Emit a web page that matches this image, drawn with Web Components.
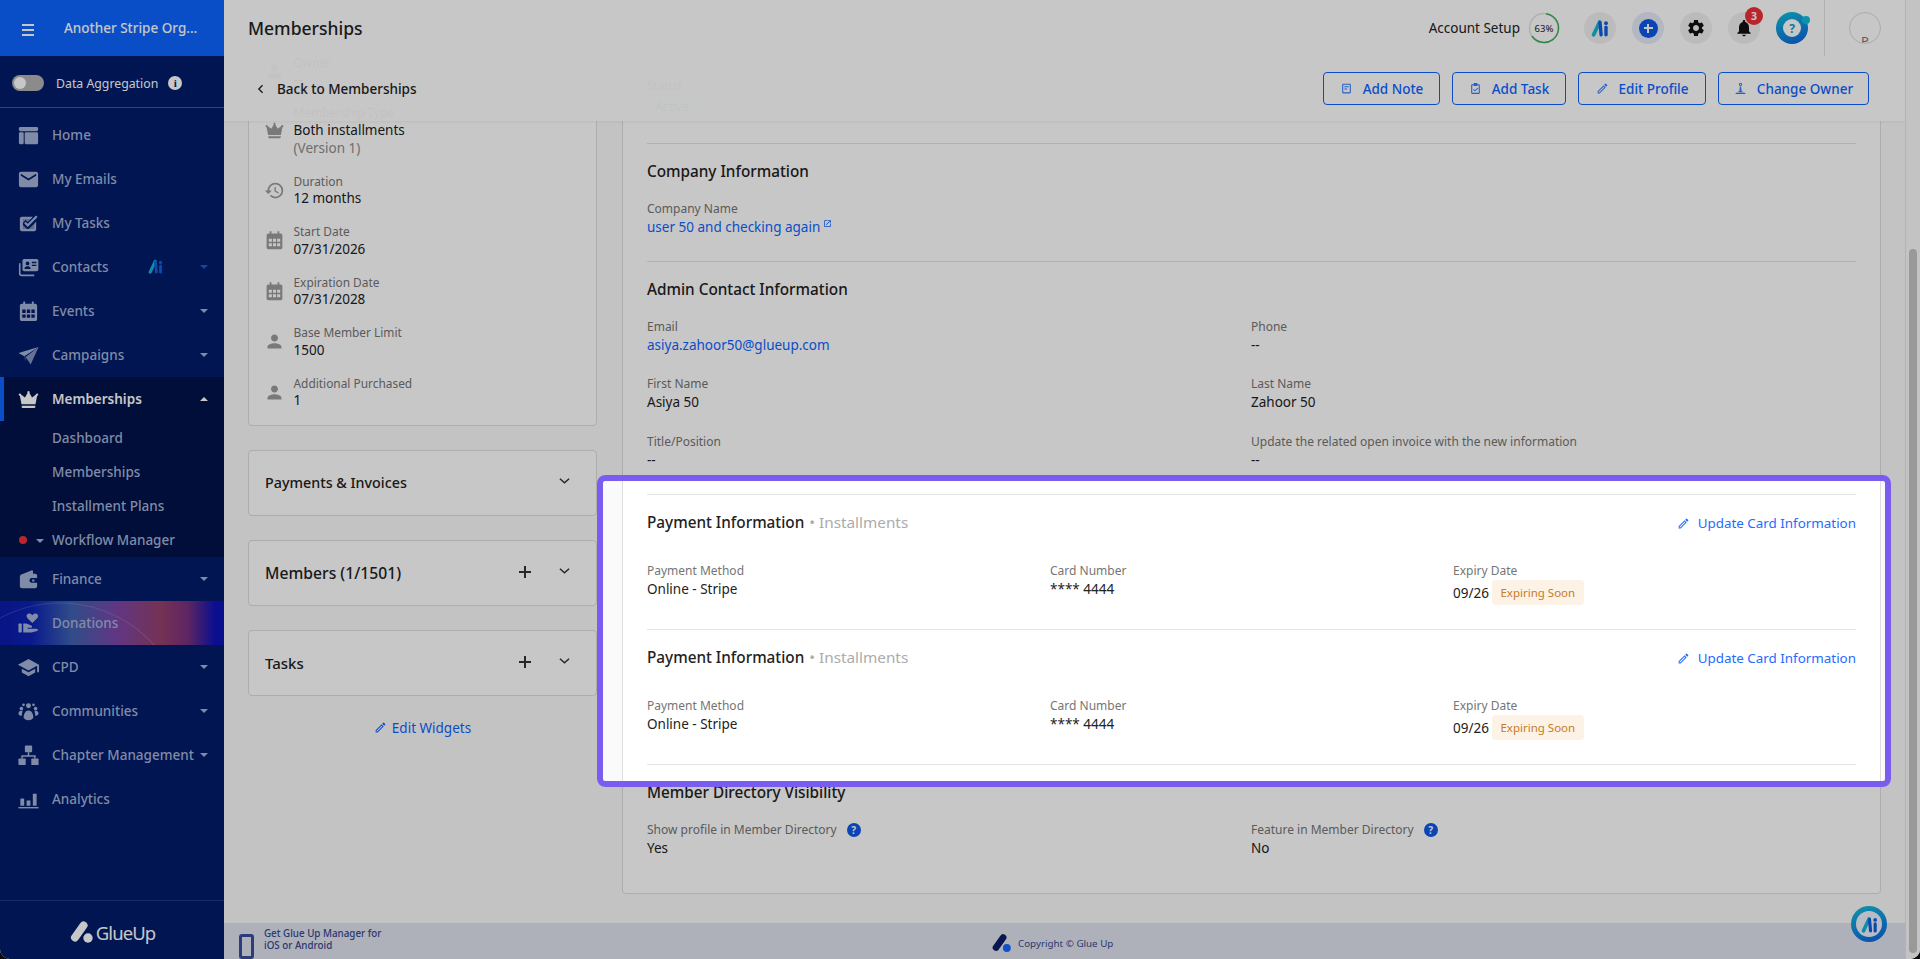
<!DOCTYPE html>
<html lang="en">
<head>
<meta charset="utf-8">
<title>Memberships</title>
<style>
  html { background: #0c0c0c; height: 100%; }
  body { margin: 0; height: 959px; overflow: hidden; font-family: "Noto Sans", "Liberation Sans", sans-serif; font-size: 13.5px; color: #222; }
</style>
</head>
<body>

<gu-app>
  <gu-sidebar slot="sidebar" org="Another Stripe Org...">
    <gu-nav-item icon="web" label="Home"></gu-nav-item>
    <gu-nav-item icon="mail" label="My Emails"></gu-nav-item>
    <gu-nav-item icon="tasks" label="My Tasks"></gu-nav-item>
    <gu-nav-item icon="contacts" label="Contacts" caret="dim" ai></gu-nav-item>
    <gu-nav-item icon="calendar" label="Events" caret="down"></gu-nav-item>
    <gu-nav-item icon="send" label="Campaigns" caret="down"></gu-nav-item>
    <gu-nav-group>
      <gu-nav-item icon="crown" label="Memberships" caret="up" active></gu-nav-item>
      <gu-sub-item label="Dashboard"></gu-sub-item>
      <gu-sub-item label="Memberships"></gu-sub-item>
      <gu-sub-item label="Installment Plans"></gu-sub-item>
      <gu-sub-item label="Workflow Manager" flag></gu-sub-item>
    </gu-nav-group>
    <gu-nav-item icon="wallet" label="Finance" caret="down"></gu-nav-item>
    <gu-nav-item icon="donate" label="Donations" promo></gu-nav-item>
    <gu-nav-item icon="school" label="CPD" caret="down"></gu-nav-item>
    <gu-nav-item icon="groups" label="Communities" caret="down"></gu-nav-item>
    <gu-nav-item icon="tree" label="Chapter Management" caret="down"></gu-nav-item>
    <gu-nav-item icon="bars" label="Analytics"></gu-nav-item>
  </gu-sidebar>

  <gu-topbar slot="topbar" heading="Memberships"></gu-topbar>

  <gu-subbar slot="subbar">
    <gu-button icon="note" style="width:117px">Add Note</gu-button>
    <gu-button icon="clip" style="width:114px">Add Task</gu-button>
    <gu-button icon="pencil" style="width:128px">Edit Profile</gu-button>
    <gu-button icon="owner" style="width:151px">Change Owner</gu-button>
  </gu-subbar>

  <gu-left-col slot="left">
    <gu-card class="facts">
      <gu-fact icon="person" label="Owner">--</gu-fact>
      <gu-fact icon="crown" label="Membership Type">Both installments<gu-muted>(Version 1)</gu-muted></gu-fact>
      <gu-fact icon="history" label="Duration">12 months</gu-fact>
      <gu-fact icon="calendar" label="Start Date">07/31/2026</gu-fact>
      <gu-fact icon="calendar" label="Expiration Date">07/31/2028</gu-fact>
      <gu-fact icon="person" label="Base Member Limit">1500</gu-fact>
      <gu-fact icon="person" label="Additional Purchased" last>1</gu-fact>
    </gu-card>
    <gu-widget heading="Payments &amp; Invoices" style="--size:14.3px"></gu-widget>
    <gu-widget heading="Members (1/1501)" style="--size:15.7px" addable></gu-widget>
    <gu-widget heading="Tasks" addable></gu-widget>
    <gu-edit-widgets></gu-edit-widgets>
  </gu-left-col>

  <gu-detail slot="right">
    <gu-status></gu-status>

    <gu-section heading="Company Information" cols="2">
      <gu-field label="Company Name"><gu-link external>user 50 and checking again</gu-link></gu-field>
    </gu-section>

    <gu-section heading="Admin Contact Information" cols="2">
      <gu-field label="Email"><gu-link>asiya.zahoor50@glueup.com</gu-link></gu-field>
      <gu-field label="Phone">--</gu-field>
      <gu-field label="First Name">Asiya 50</gu-field>
      <gu-field label="Last Name">Zahoor 50</gu-field>
      <gu-field label="Title/Position">--</gu-field>
      <gu-field label="Update the related open invoice with the new information">--</gu-field>
    </gu-section>

    <gu-section heading="Payment Information" sub="Installments" cols="3" roomy>
      <gu-update-link slot="action"></gu-update-link>
      <gu-field label="Payment Method">Online - Stripe</gu-field>
      <gu-field label="Card Number">**** 4444</gu-field>
      <gu-field label="Expiry Date">09/26<gu-badge>Expiring Soon</gu-badge></gu-field>
    </gu-section>

    <gu-section heading="Payment Information" sub="Installments" cols="3" roomy>
      <gu-update-link slot="action"></gu-update-link>
      <gu-field label="Payment Method">Online - Stripe</gu-field>
      <gu-field label="Card Number">**** 4444</gu-field>
      <gu-field label="Expiry Date">09/26<gu-badge>Expiring Soon</gu-badge></gu-field>
    </gu-section>

    <gu-section heading="Member Directory Visibility" cols="2" closing>
      <gu-field label="Show profile in Member Directory" help>Yes</gu-field>
      <gu-field label="Feature in Member Directory" help>No</gu-field>
    </gu-section>
  </gu-detail>

  <gu-footer slot="footer"></gu-footer>
</gu-app>

<script>
const FONT = '"Noto Sans", "Liberation Sans", sans-serif';

// 24x24 icon bodies, all painted with currentColor
const ICONS = {
  web: '<rect x="2" y="3" width="20" height="4.6" rx="1.5"/><rect x="2" y="8.6" width="5" height="12.4" rx="1.2"/><rect x="8" y="8.6" width="14" height="12.4" rx="1.2"/>',
  mail: '<path d="M20 4H4c-1.1 0-2 .9-2 2v12c0 1.1.9 2 2 2h16c1.1 0 2-.9 2-2V6c0-1.1-.9-2-2-2zm0 4l-8 5-8-5V6l8 5 8-5v2z"/>',
  tasks: '<path fill-rule="evenodd" d="M5 5h11.5l-2 2.2H6.2v10.6h11.6v-5.3L20 10v8c0 1.1-.9 2-2 2H5c-1.1 0-2-.9-2-2V7c0-1.1.9-2 2-2z"/><path d="M11.2 15.6L7.4 11.8l1.7-1.7 2.1 2.1 8.6-8.6 1.7 1.7z"/><path opacity=".75" d="M6.2 7.2h8.3l-3.3 3.3-2.1-2.1-2.9 2.9z"/><path opacity=".75" d="M6.2 13.5v4.3h11.6v-5.3l-6.6 6z"/>',
  contacts: '<path fill-rule="evenodd" d="M7.5 3h13c1 0 1.8.8 1.8 1.8v9.4c0 1-.8 1.8-1.8 1.8h-13c-1 0-1.8-.8-1.8-1.8V4.8C5.7 3.8 6.5 3 7.5 3zM11 5.7a2 2 0 1 0 0 4 2 2 0 0 0 0-4zM7.9 13.5h6.2v-.8c0-1.4-2-2-3.1-2s-3.1.6-3.1 2zM15.5 6h4.7v1.5h-4.7zM15.5 9h4.7v1.5h-4.7z"/><path d="M2 7.5h1.7v10.700c0 .7.5 1.2 1.2 1.2H18V21H4.5C3.1 21 2 19.9 2 18.5z"/>',
  calendar: '<path fill-rule="evenodd" d="M6.5 1.5h2V4h7V1.5h2V4H19c1.1 0 2 .9 2 2v14c0 1.1-.9 2-2 2H5c-1.1 0-2-.9-2-2V6c0-1.1.9-2 2-2h1.5zM5.5 10v3.5H9V10zM10.3 10v3.5h3.4V10zM15 10v3.5h3.5V10zM5.5 15v3.5H9V15zM10.3 15v3.5h3.4V15zM15 15v3.5h3.5V15z"/>',
  send: '<path d="M22.5 3L1.5 9.5l6.2 3.3z"/><path opacity=".8" d="M22.5 3L9 13.5l5.3 8z"/><path opacity=".6" d="M7.7 12.8L9 13.5l-.3 5z"/>',
  crown: '<path d="M12 3.2a1.3 1.3 0 0 1 1 2.1l2.7 4.7 4.1-3.1a1.2 1.2 0 1 1 1.2 1.3L19.3 17H4.7L3 8.2a1.2 1.2 0 1 1 1.2-1.3L8.3 10 11 5.3a1.3 1.3 0 0 1 1-2.1z"/><path d="M4.9 18.5h14.2v1.3c0 .6-.4 1-1 1H5.9c-.6 0-1-.4-1-1z"/>',
  wallet: '<path fill-rule="evenodd" d="M3 9c0-1 .6-1.9 1.5-2.3L15 2.5c.8-.3 1.7.3 1.7 1.2V6H19c1.1 0 2 .9 2 2v11c0 1.1-.9 2-2 2H5c-1.1 0-2-.9-2-2zM15.5 10.5a2.5 2.5 0 0 0 0 5H21v-5zM15.8 12h2.4v2h-2.4z"/>',
  donate: '<path d="M16 11.5l-3.8-3.7C10.8 6.4 10 5.3 10 4.1 10 2.6 11.2 1.5 12.6 1.5c1.3 0 2.5.7 3.4 1.9.9-1.2 2.1-1.9 3.4-1.9 1.4 0 2.6 1.1 2.6 2.6 0 1.2-.8 2.3-2.2 3.7z"/><rect x="1.5" y="12" width="3.5" height="9.5" rx=".8"/><path d="M6.5 12h3.2l5.2 2c1.3.5 1 2.5-.5 2.5H11v1h9c1.8 0 2.5 1.5 1 2.3l-6 1.7H6.5z"/>',
  school: '<path d="M5 13.18v4L12 21l7-3.82v-4L12 17l-7-3.82zM12 3L1 9l11 6 9-4.91V17h2V9L12 3z"/>',
  groups: '<circle cx="12" cy="6" r="2.6"/><path d="M7 18c0-4 2.2-7 5-7s5 3 5 7c0 1.5-2 3-5 3s-5-1.5-5-3z"/><circle cx="4.6" cy="9" r="1.9"/><circle cx="19.4" cy="9" r="1.9"/><circle cx="6.8" cy="5" r="1.4"/><circle cx="17.2" cy="5" r="1.4"/><path d="M1.5 14c0-1.3 1.2-2.7 2.8-2.7.6 0 1.1.2 1.6.5-.6 1.5-.9 3.1-.9 4.7C3 16.5 1.5 15.5 1.5 14zM22.5 14c0-1.3-1.2-2.7-2.8-2.7-.6 0-1.1.2-1.6.5.6 1.5.9 3.1.9 4.7 1.5 0 3.5-1 3.5-2.500z"/>',
  tree: '<rect x="8.2" y="1.5" width="7.6" height="7" rx="1"/><rect x="1.5" y="15" width="7.6" height="7" rx="1"/><rect x="14.9" y="15" width="7.6" height="7" rx="1"/><path d="M11.2 8.5h1.6v3.2h6.7V15h-1.6v-1.7H6.1V15H4.500v-3.3h6.7z"/>',
  bars: '<rect x="3.5" y="11" width="4" height="7.5"/><rect x="10" y="13" width="4" height="5.5"/><rect x="16.5" y="6" width="4" height="12.5"/><rect x="1.5" y="19.8" width="21" height="1.5"/>',
  person: '<path d="M12 12c2.21 0 4-1.79 4-4s-1.79-4-4-4-4 1.79-4 4 1.79 4 4 4zm0 2c-2.67 0-8 1.34-8 4v2h16v-2c0-2.66-5.33-4-8-4z"/>',
  history: '<path d="M13 3a9 9 0 0 0-9 9H1l3.89 3.89.07.14L9 12H6c0-3.87 3.13-7 7-7s7 3.13 7 7-3.13 7-7 7c-1.93 0-3.68-.79-4.94-2.06l-1.42 1.42A8.954 8.954 0 0 0 13 21a9 9 0 0 0 0-18zm-1 5v5l4.28 2.54.72-1.21-3.5-2.08V8H12z"/>',
  gear: '<path d="M19.14 12.94c.04-.3.06-.61.06-.94 0-.32-.02-.64-.07-.94l2.03-1.58c.18-.14.23-.41.12-.61l-1.92-3.32c-.12-.22-.37-.29-.59-.22l-2.39.96c-.5-.38-1.03-.7-1.62-.94l-.36-2.54c-.04-.24-.24-.41-.48-.41h-3.84c-.24 0-.43.17-.47.41l-.36 2.54c-.59.24-1.13.57-1.62.94l-2.39-.96c-.22-.08-.47 0-.59.22L2.74 8.87c-.12.21-.08.47.12.61l2.03 1.58c-.05.3-.09.63-.09.94s.02.64.07.94l-2.03 1.58c-.18.14-.23.41-.12.61l1.92 3.32c.12.22.37.29.59.22l2.39-.96c.5.38 1.03.7 1.62.94l.36 2.54c.05.24.24.41.48.41h3.84c.24 0 .44-.17.47-.41l.36-2.54c.59-.24 1.13-.56 1.62-.94l2.39.96c.22.08.47 0 .59-.22l1.92-3.32c.12-.22.07-.47-.12-.61l-2.01-1.58zM12 15.6c-1.98 0-3.6-1.62-3.6-3.6s1.62-3.6 3.6-3.6 3.6 1.62 3.6 3.6-1.62 3.6-3.6 3.6z"/>',
  bell: '<path d="M12 22c1.1 0 2-.9 2-2h-4c0 1.1.9 2 2 2zm6-6v-5c0-3.07-1.63-5.64-4.5-6.32V4c0-.83-.67-1.5-1.5-1.5s-1.5.67-1.5 1.5v.68C7.64 5.36 6 7.92 6 11v5l-2 2v1h16v-1l-2-2z"/>',
  pencil: '<path fill-rule="evenodd" d="M3 17.25V21h3.75L17.81 9.94l-3.75-3.75L3 17.25zM5.92 19.3H4.7v-1.22l9.36-9.36 1.22 1.22L5.92 19.3zM20.71 7.04a1 1 0 0 0 0-1.41l-2.34-2.34a1 1 0 0 0-1.41 0l-1.83 1.83 3.75 3.75 1.83-1.83z"/>',
  note: '<path fill-rule="evenodd" d="M6 3h12c1.1 0 2 .9 2 2v14c0 1.1-.9 2-2 2H6c-1.1 0-2-.9-2-2V5c0-1.1.9-2 2-2zm0 2v14h12V5zM8 8h8v1.8H8zM8 12h5v1.8H8z"/>',
  clip: '<path fill-rule="evenodd" d="M9.5 2h5c.6 0 1 .4 1 1v1H18c1.1 0 2 .9 2 2v14c0 1.1-.9 2-2 2H6c-1.1 0-2-.9-2-2V6c0-1.1.9-2 2-2h2.5V3c0-.6.4-1 1-1zM6 6v14h12V6h-2.5v1.5h-7V6zM15.6 10.5l1.3 1.3-5.9 5.9-3.4-3.4 1.3-1.3 2.1 2.1z"/>',
  owner: '<path fill-rule="evenodd" d="M12 1.5a3 3 0 1 1 0 6 3 3 0 0 1 0-6zm0 1.8a1.2 1.2 0 1 0 0 2.4 1.2 1.2 0 0 0 0-2.4z"/><path d="M10.8 8.5h2.4l.8 8.5c2 .3 3.5 1 3.5 1.8H6.5c0-.8 1.5-1.5 3.5-1.8z"/><rect x="3" y="20" width="18" height="2" rx="1"/>',
  ext: '<path d="M19 19H5V5h7V3H5a2 2 0 0 0-2 2v14a2 2 0 0 0 2 2h14c1.1 0 2-.9 2-2v-7h-2v7zM14 3v2h3.59l-9.83 9.83 1.41 1.41L19 6.41V10h2V3h-7z"/>'
};

const svg = (name, size) =>
  `<svg viewBox="0 0 24 24" width="${size}" height="${size}" fill="currentColor" aria-hidden="true">${ICONS[name]}</svg>`;

// the three-stroke "Ai" mark used in the bar, the contacts row and the chat bubble
const aiMark = (w, h) => `<svg viewBox="0 0 24 24" width="${w}" height="${h}" aria-hidden="true">
  <path d="M3.5 21L11.5 4" stroke="#12b5d8" stroke-width="5" stroke-linecap="round" fill="none"/>
  <path d="M12 5L13.5 21" stroke="#0e5fe0" stroke-width="4.5" stroke-linecap="round" fill="none"/>
  <circle cx="20" cy="5.5" r="2.6" fill="#0e5fe0"/>
  <path d="M20 11V21" stroke="#0e5fe0" stroke-width="4.5" stroke-linecap="round" fill="none"/>
</svg>`;

// the Glue Up mark: slanted pill and a dot
const glueMark = (size, pill, dot) => `<svg viewBox="0 0 24 24" width="${size}" height="${size}" aria-hidden="true">
  <path d="M14.5 5.5L6 17.5" stroke="${pill}" stroke-width="8" stroke-linecap="round" fill="none"/>
  <circle cx="19" cy="18" r="4.7" fill="${dot}"/>
</svg>`;

// small helper so every element below reads the same
function define(tag, html) {
  customElements.define(tag, class extends HTMLElement {
    constructor() {
      super();
      this.attachShadow({ mode: 'open' });
    }
    connectedCallback() {
      this.shadowRoot.innerHTML = typeof html === 'function' ? html(this) : html;
    }
  });
}

define('gu-app', `
  <style>
    :host { display: grid; grid-template-columns: 224px 1fr 15px; height: 959px; position: relative; overflow: hidden; border-radius: 0 0 10px 10px; background: #fafafa; font-family: ${FONT}; }
    .main { display: flex; flex-direction: column; min-width: 0; height: 959px; }
    .view { flex: 1; position: relative; overflow: hidden; min-height: 0; }
    .scroll { display: grid; grid-template-columns: 349px 1259px; column-gap: 25px; padding: 0 24px; margin-top: -30px; align-items: start; }
    .track { background: #fafafa; border-left: 1px solid #e6e6e6; position: relative; }
    /* scrollbar thumb sits over its track */
    .thumb { position: absolute; left: 3px; top: 249px; bottom: 6px; width: 8px; border-radius: 4px; background: #c4c4c4; }
    /* the tour highlight: everything outside it is dimmed */
    .spot { position: absolute; left: 597px; top: 475px; width: 1294px; height: 312px; box-sizing: border-box; border: 6px solid #7a5cf0; border-radius: 8px; box-shadow: 0 0 0 3000px rgba(0, 0, 0, .22); pointer-events: none; z-index: 20; }
    .bubble { position: absolute; left: 1851px; top: 906px; width: 36px; height: 36px; border-radius: 50%; z-index: 10; display: flex; align-items: center; justify-content: center; background: linear-gradient(160deg, #16c0dc, #0e5fe0); }
    .bubble span { width: 26px; height: 26px; border-radius: 50%; background: #eef3fa; display: flex; align-items: center; justify-content: center; }
  </style>
  <slot name="sidebar"></slot>
  <div class="main">
    <slot name="topbar"></slot>
    <div class="view">
      <div class="scroll"><slot name="left"></slot><slot name="right"></slot></div>
      <slot name="subbar"></slot>
    </div>
    <slot name="footer"></slot>
  </div>
  <div class="track"><div class="thumb"></div></div>
  <div class="bubble"><span>${aiMark(17, 17)}</span></div>
  <div class="spot"></div>
`);

define('gu-sidebar', el => `
  <style>
    :host { display: flex; flex-direction: column; height: 959px; background: #001c68; color: #fff; font-size: 14px; }
    .org { height: 56px; flex: none; background: #0e65ff; display: flex; align-items: center; padding-left: 22px; gap: 30px; font-size: 13.5px; font-weight: 500; white-space: nowrap; }
    .burger { width: 12px; height: 12px; border-top: 2px solid #fff; border-bottom: 2px solid #fff; position: relative; box-sizing: border-box; margin-top: 4px; }
    .burger::after { content: ""; position: absolute; left: 0; right: 0; top: 3px; height: 2px; background: #fff; }
    .agg { height: 52px; flex: none; box-sizing: border-box; border-bottom: 1px solid #45578e; display: flex; align-items: center; padding: 3px 0 0 12px; font-size: 12.3px; }
    .toggle { width: 32px; height: 16px; border-radius: 8px; background: #b3b3b3; position: relative; margin-right: 12px; }
    .toggle::after { content: ""; position: absolute; left: 2px; top: 2px; width: 12px; height: 12px; border-radius: 50%; background: #fff; }
    .info { width: 14px; height: 14px; border-radius: 50%; background: #fff; color: #001c68; font: 700 11px/14px "Liberation Serif", serif; text-align: center; margin-left: 10px; }
    nav { flex: 1; display: flex; flex-direction: column; padding-top: 5px; }
    .brand { height: 59px; flex: none; border-top: 1px solid #1d3680; display: flex; align-items: center; justify-content: center; gap: 3px; padding-top: 4px; font-size: 18.5px; letter-spacing: -.9px; box-sizing: border-box; }
  </style>
  <div class="org"><span class="burger"></span><span>${el.getAttribute('org')}</span></div>
  <div class="agg"><span class="toggle"></span>Data Aggregation<span class="info">i</span></div>
  <nav><slot></slot></nav>
  <div class="brand">${glueMark(24, '#fff', '#fff')}<span>GlueUp</span></div>
`);

define('gu-nav-group', `
  <style>:host { display: block; background: #001349; height: 180px; }</style>
  <slot></slot>
`);

define('gu-nav-item', el => {
  const caret = el.getAttribute('caret');
  const active = el.hasAttribute('active');
  const promo = el.hasAttribute('promo');
  return `
  <style>
    :host { display: block; height: 44px; flex: none; }
    .row { height: 44px; display: flex; align-items: center; position: relative; color: ${active ? '#fff' : '#a5b2d6'}; font-weight: ${active ? 600 : 500}; font-size: 13.5px; white-space: nowrap; box-sizing: border-box; ${active ? 'border-left: 4px solid #0e65ff;' : ''} ${promo ? 'background: radial-gradient(circle at 60px 128px, transparent 125px, rgba(255,255,255,.14) 126px, transparent 127px), linear-gradient(90deg, #0b1aa8 0, #0c22b4 14%, #3f62b0 32%, #7c46a8 52%, #96406c 72%, #78307e 84%, #0c14b8 96%);' : ''} }
    .ico { width: 23px; height: 23px; margin-left: ${active ? '12.5px' : '16.5px'}; margin-right: 12.5px; display: flex; }
    .ai { position: absolute; left: 148px; top: 14px; display: flex; }
    .caret { position: absolute; left: ${active ? '196px' : '200px'}; top: 20px; width: 0; height: 0; border-left: 4px solid transparent; border-right: 4px solid transparent; }
    .down { border-top: 4px solid currentColor; }
    .up { border-bottom: 4px solid #fff; }
    .dim { border-top: 4px solid #1a5ad0; }
  </style>
  <div class="row">
    <span class="ico">${svg(el.getAttribute('icon'), 23)}</span>${el.getAttribute('label')}
    ${el.hasAttribute('ai') ? `<span class="ai">${aiMark(15, 15)}</span>` : ''}
    ${caret ? `<span class="caret ${caret}"></span>` : ''}
  </div>`;
});

define('gu-sub-item', el => `
  <style>
    :host { display: block; height: 34px; }
    .row { height: 34px; display: flex; align-items: center; padding-left: 52px; color: #a5b2d6; font-size: 13.5px; font-weight: 500; position: relative; white-space: nowrap; }
    /* status marker in front of the label */
    .dot { position: absolute; left: 19px; top: 13px; width: 8px; height: 8px; border-radius: 50%; background: #f0303a; }
    .tri { position: absolute; left: 36px; top: 16px; border-left: 4px solid transparent; border-right: 4px solid transparent; border-top: 4px solid #a5b2d6; }
  </style>
  <div class="row">${el.hasAttribute('flag') ? '<span class="dot"></span><span class="tri"></span>' : ''}${el.getAttribute('label')}</div>
`);

define('gu-topbar', el => `
  <style>
    :host { display: flex; align-items: center; height: 56px; flex: none; background: #fff; padding-left: 24px; position: relative; z-index: 3; }
    h1 { margin: 0; font-size: 17.5px; font-weight: 500; color: #222; flex: 1; }
    .setup { font-size: 13.5px; color: #222; margin-right: 8px; }
    .ring { position: relative; width: 32px; height: 32px; margin-right: 24px; font-size: 9.5px; color: #222; }
    .ring svg { display: block; }
    .ring span { position: absolute; inset: 0; display: flex; align-items: center; justify-content: center; }
    .tools { display: flex; gap: 16px; margin-right: 16px; }
    .tool { width: 32px; height: 32px; border-radius: 50%; background: #f0f0f0; display: flex; align-items: center; justify-content: center; position: relative; color: #111; }
    .plus { background: #e4ebf9; }
    .plus i { width: 19px; height: 19px; border-radius: 50%; background: #0e58e8; position: relative; display: block; }
    .plus i::before { content: ""; position: absolute; left: 5px; right: 5px; top: 8.5px; height: 2px; background: #fff; }
    .plus i::after { content: ""; position: absolute; top: 5px; bottom: 5px; left: 8.5px; width: 2px; background: #fff; }
    .count { position: absolute; left: 17px; top: -5px; width: 18px; height: 18px; border-radius: 50%; background: #ef3038; color: #fff; font-size: 10.5px; font-weight: 700; display: flex; align-items: center; justify-content: center; }
    .help { background: linear-gradient(160deg, #10c0da, #0e62dc); }
    .help b { width: 18px; height: 18px; border-radius: 50%; background: #fff; color: #109ad8; font-size: 12px; display: flex; align-items: center; justify-content: center; }
    .help::after { content: ""; position: absolute; right: -2px; top: 4px; width: 8px; height: 8px; border-radius: 50%; background: #10bcdc; }
    .user { width: 81px; height: 56px; box-sizing: border-box; border-left: 1px solid #e3e3e3; display: flex; align-items: center; justify-content: flex-start; padding-left: 24px; }
    .avatar { width: 32px; height: 32px; box-sizing: border-box; border: 1px solid #dcdcdc; border-radius: 50%; overflow: hidden; text-align: center; font-size: 13px; line-height: 13px; padding-top: 22px; color: #777; }
  </style>
  <h1>${el.getAttribute('heading')}</h1>
  <span class="setup">Account Setup</span>
  <div class="ring">
    <svg viewBox="0 0 32 32" width="32" height="32"><circle cx="16" cy="16" r="14.5" fill="none" stroke="#e2e2e2" stroke-width="1.5"/><circle cx="16" cy="16" r="14.5" fill="none" stroke="#3fae5a" stroke-width="1.5" stroke-dasharray="57.4 91.1" transform="rotate(-82 16 16)"/></svg>
    <span>63%</span>
  </div>
  <div class="tools">
    <div class="tool">${aiMark(18, 18)}</div>
    <div class="tool plus"><i></i></div>
    <div class="tool">${svg('gear', 20)}</div>
    <div class="tool">${svg('bell', 20)}<span class="count">3</span></div>
    <div class="tool help"><b>?</b></div>
  </div>
  <div class="user"><div class="avatar">P</div></div>
`);

define('gu-subbar', `
  <style>
    /* translucent bar: the scrolled page shows faintly through it */
    :host { position: absolute; left: 0; right: 0; top: 0; height: 65px; box-sizing: border-box; background: rgba(255, 255, 255, .95); box-shadow: 0 1px 3px rgba(0,0,0,.06); display: flex; align-items: center; padding: 0 36px 0 33px; gap: 12px; z-index: 2; }
    .back { display: flex; align-items: center; gap: 13px; flex: 1; font-size: 13.5px; font-weight: 500; color: #222; }
    .back svg { display: block; }
  </style>
  <div class="back"><svg viewBox="0 0 8 12" width="7" height="10" fill="none" stroke="#222" stroke-width="1.6"><path d="M6.5 1.5L2 6l4.5 4.5"/></svg>Back to Memberships</div>
  <slot></slot>
`);

define('gu-button', el => `
  <style>
    :host { display: block; height: 33px; }
    button { width: 100%; height: 33px; box-sizing: border-box; border: 1px solid #0e65ff; border-radius: 4px; background: transparent; color: #0e65ff; font: 500 13.5px ${FONT}; display: flex; align-items: center; justify-content: center; gap: 10px; padding: 0; }
    svg { display: block; opacity: .85; }
  </style>
  <button>${svg(el.getAttribute('icon'), 13)}<slot></slot></button>
`);

define('gu-left-col', `
  <style>:host { display: flex; flex-direction: column; gap: 24px; }</style>
  <slot></slot>
`);

define('gu-card', `
  <style>:host { display: block; box-sizing: border-box; background: #fff; border: 1px solid #dedede; border-radius: 4px; padding: 27px 0 15px 15px; }</style>
  <slot></slot>
`);

define('gu-fact', el => `
  <style>
    :host { display: block; margin-bottom: ${el.hasAttribute('last') ? 0 : '15.4px'}; }
    .row { display: flex; align-items: center; gap: 8.5px; }
    .ico { width: 21px; height: 21px; color: #9b9b9b; flex: none; display: flex; align-self: center; }
    .label { font-size: 11.9px; line-height: 17.5px; color: #757575; }
    .val { font-size: 13.5px; line-height: 17.6px; color: #222; }
  </style>
  <div class="row">
    <span class="ico">${svg(el.getAttribute('icon'), 21)}</span>
    <div><div class="label">${el.getAttribute('label')}</div><div class="val"><slot></slot></div></div>
  </div>
`);

define('gu-muted', `
  <style>:host { display: block; color: #8d8d8d; }</style>
  <slot></slot>
`);

define('gu-widget', el => `
  <style>
    :host { display: block; height: 66px; box-sizing: border-box; background: #fff; border: 1px solid #dedede; border-radius: 4px; }
    .row { height: 64px; display: flex; align-items: center; padding-left: 16px; font-size: var(--size, 15px); font-weight: 500; color: #222; position: relative; }
    .plus { position: absolute; left: 270px; top: 25px; width: 12px; height: 12px; }
    .plus::before { content: ""; position: absolute; left: 0; right: 0; top: 5px; height: 2px; background: #333; }
    .plus::after { content: ""; position: absolute; top: 0; bottom: 0; left: 5px; width: 2px; background: #333; }
    svg { position: absolute; left: 310px; top: 26px; }
  </style>
  <div class="row">${el.getAttribute('heading')}
    ${el.hasAttribute('addable') ? '<span class="plus"></span>' : ''}
    <svg viewBox="0 0 12 8" width="11" height="8" fill="none" stroke="#333" stroke-width="1.6"><path d="M1 1.5l5 4.5 5-4.5"/></svg>
  </div>
`);

define('gu-edit-widgets', `
  <style>
    :host { display: flex; justify-content: center; align-items: center; gap: 5px; margin-top: -2px; color: #0e65ff; font-size: 13.5px; height: 20px; }
    svg { display: block; }
  </style>
  ${svg('pencil', 13)}Edit Widgets
`);

define('gu-detail', `
  <style>:host { display: block; box-sizing: border-box; height: 868px; background: #fff; border: 1px solid #dedede; border-radius: 4px; padding: 0 24px; }</style>
  <slot></slot>
`);

define('gu-status', `
  <style>
    :host { display: block; height: 116px; box-sizing: border-box; padding-top: 50px; }
    .label { font-size: 11.9px; line-height: 17.5px; color: #757575; }
    .pill { display: inline-block; margin-top: 2px; padding: 0 8px; background: #e9f7ee; border-radius: 4px; font-size: 12px; line-height: 20px; color: #2f9e55; }
  </style>
  <div class="label">Status</div>
  <span class="pill">Active</span>
`);

define('gu-section', el => `
  <style>
    :host { display: block; border-top: 1px solid #e4e4e4; box-sizing: border-box; padding-top: 17px; padding-bottom: ${el.hasAttribute('roomy') ? '24px' : '25.5px'}; }
    .head { display: flex; justify-content: space-between; align-items: center; height: 20px; margin-bottom: ${el.hasAttribute('roomy') ? '30px' : '18.5px'}; }
    h2 { margin: 0; font-size: 15.3px; font-weight: 500; color: #222; }
    h2 span { color: #ababab; font-weight: 400; margin-left: 1px; }
    .grid { display: grid; gap: 21.5px 0; }
    :host([cols="3"]) .grid { grid-template-columns: 403px 403px 1fr; }
    :host([cols="2"]) .grid { grid-template-columns: 604px 1fr; }
  </style>
  <div class="head">
    <h2>${el.getAttribute('heading')}${el.hasAttribute('sub') ? `<span> • ${el.getAttribute('sub')}</span>` : ''}</h2>
    <slot name="action"></slot>
  </div>
  <div class="grid"><slot></slot></div>
`);

define('gu-field', el => `
  <style>
    :host { display: block; min-width: 0; }
    .label { font-size: 12px; line-height: 18px; color: #757575; display: flex; align-items: center; gap: 10px; white-space: nowrap; }
    .help { width: 14px; height: 14px; border-radius: 50%; background: #0e58e8; color: #fff; font-size: 10px; font-weight: 700; display: flex; align-items: center; justify-content: center; }
    .val { font-size: 13.5px; line-height: 18px; color: #222; display: flex; align-items: center; }
  </style>
  <div class="label">${el.getAttribute('label')}${el.hasAttribute('help') ? '<span class="help">?</span>' : ''}</div>
  <div class="val"><slot></slot></div>
`);

define('gu-link', el => `
  <style>
    :host { display: inline-flex; align-items: flex-start; gap: 3px; color: #0e65ff; }
    svg { display: block; margin-top: 1px; }
  </style>
  <slot></slot>${el.hasAttribute('external') ? svg('ext', 9) : ''}
`);

define('gu-badge', `
  <style>:host { display: inline-block; margin-left: 3px; padding: 0 8.5px; height: 25px; line-height: 25px; border-radius: 4px; background: #fdf2e6; color: #c87a26; font-size: 11.5px; white-space: nowrap; }</style>
  <slot></slot>
`);

define('gu-update-link', `
  <style>
    :host { display: flex; align-items: center; gap: 8px; padding-top: 2px; color: #1f6bff; font-size: 13.4px; font-weight: 400; white-space: nowrap; }
    svg { display: block; }
  </style>
  ${svg('pencil', 13)}Update Card Information
`);

define('gu-footer', `
  <style>
    :host { display: flex; align-items: flex-start; height: 36px; flex: none; background: #dfe3ee; overflow: hidden; color: #38498f; font-size: 9.8px; position: relative; z-index: 1; }
    .phone { width: 15px; height: 25px; box-sizing: border-box; border: 3px solid #3a4f9e; border-radius: 3px; margin: 11px 10px 0 15px; flex: none; }
    .app { line-height: 12px; padding-top: 5px; width: 150px; flex: none; font-weight: 500; }
    .copy { display: flex; align-items: center; gap: 7px; margin-left: 577px; height: 40px; }
    svg { display: block; }
  </style>
  <div class="phone"></div>
  <div class="app">Get Glue Up Manager for<br>iOS or Android</div>
  <div class="copy">${glueMark(20, '#0a1f68', '#1466ff')}<span>Copyright © Glue Up</span></div>
`);
</script>
</body>
</html>
